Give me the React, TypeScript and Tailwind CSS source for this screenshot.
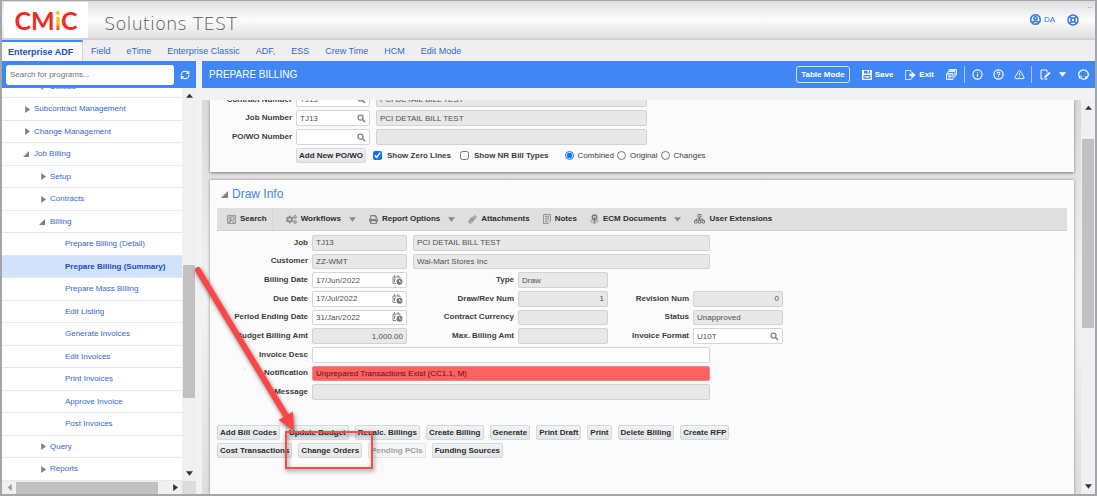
import React from "react";
import { Info, CircleHelp, TriangleAlert, RefreshCw, LifeBuoy } from "lucide-react";
import { FaRegUserCircle, FaCogs, FaPrint } from "react-icons/fa";

const navItems = ["Field", "eTime", "Enterprise Classic", "ADF,", "ESS", "Crew Time", "HCM", "Edit Mode"];

type Node = { label: string; level: 1 | 2 | 3; state?: "open" | "closed"; active?: boolean };

const tree: Node[] = [
  { label: "Utilities", level: 2, state: "closed" },
  { label: "Subcontract Management", level: 1, state: "closed" },
  { label: "Change Management", level: 1, state: "closed" },
  { label: "Job Billing", level: 1, state: "open" },
  { label: "Setup", level: 2, state: "closed" },
  { label: "Contracts", level: 2, state: "closed" },
  { label: "Billing", level: 2, state: "open" },
  { label: "Prepare Billing (Detail)", level: 3 },
  { label: "Prepare Billing (Summary)", level: 3, active: true },
  { label: "Prepare Mass Billing", level: 3 },
  { label: "Edit Listing", level: 3 },
  { label: "Generate Invoices", level: 3 },
  { label: "Edit Invoices", level: 3 },
  { label: "Print Invoices", level: 3 },
  { label: "Approve Invoice", level: 3 },
  { label: "Post Invoices", level: 3 },
  { label: "Query", level: 2, state: "closed" },
  { label: "Reports", level: 2, state: "closed" },
];

const indent = { 1: "pl-5", 2: "pl-9", 3: "pl-[63px]" };

function Tri({ dir, className = "" }: { dir: "up" | "down" | "left" | "right" | "open"; className?: string }) {
  const d = {
    up: "M0 6.500 L4 2 L8 6.500Z",
    down: "M0 1.500 L8 1.500 L4 6.500Z",
    left: "M6.500 0 L2 4 L6.500 8Z",
    right: "M2.500 0 L8 4 L2.500 8Z",
    open: "M8 0 L8 8 L0 8Z",
  }[dir];
  return (
    <svg viewBox="0 0 8 8" className={"shrink-0 fill-current " + className} aria-hidden="true">
      <path d={d} />
    </svg>
  );
}

function TreeRow({ node }: { node: Node }) {
  return (
    <li className={"h-[22px] shrink-0 border-b border-[#e3e9f1] even:h-[23px] " + (node.active ? "bg-[#d3e2fb]" : "bg-white")}>
      <a href="#" className={"flex h-full items-center whitespace-nowrap " + indent[node.level] + (node.active ? " font-bold text-[#1a4fb8]" : " text-[#3567cc]")}>
        {node.state && (
          <span className="flex w-3 shrink-0 pl-px text-[#808080]">
            <Tri dir={node.state === "open" ? "open" : "right"} className={node.state === "open" ? "size-[6px]" : "size-[7px]"} />
          </span>
        )}
        {node.label}
      </a>
    </li>
  );
}

function CalendarClock() {
  return (
    <svg viewBox="0 0 22 20" className="h-[10px] w-[11px]" fill="none" stroke="#858585" strokeWidth="2" aria-hidden="true">
      <path d="M8 17H2V4h14v3M5 0v5M12 0v5M5 8v6M5 8h3" />
      <circle cx="15" cy="13.500" r="6" fill="#757575" stroke="none" />
      <path d="M15 10v4h4" stroke="#fff" strokeWidth="1.500" />
    </svg>
  );
}

function Magnifier() {
  return (
    <svg viewBox="0 0 18 18" className="size-[9px]" fill="none" stroke="#808080" strokeWidth="2.500" aria-hidden="true">
      <circle cx="7" cy="7" r="5" />
      <path d="M11 11l5 5" strokeWidth="3.500" />
    </svg>
  );
}

type FieldProps = {
  id: string;
  value?: string;
  kind?: "edit" | "readonly" | "error";
  icon?: "search" | "date";
  right?: boolean;
  label?: string;
  className?: string;
};

function Field({ id, value = "", kind = "readonly", icon, right, label, className = "" }: FieldProps) {
  const tone = {
    edit: "bg-white border-[#d6d6d6]",
    readonly: "bg-[#e8e8e8] border-[#d2d2d2]",
    error: "bg-[#ff6060] border-[#e88] text-[#4a1a1a]",
  }[kind];
  return (
    <div className={"flex min-w-0 items-center rounded-[2px] border px-[3px] " + tone + " " + className}>
      <input
        id={id}
        aria-label={label}
        defaultValue={value}
        readOnly={kind !== "edit"}
        className={"h-full w-full min-w-0 bg-transparent outline-none " + (right ? "text-right" : "")}
      />
      {icon && (
        <button type="button" aria-label={icon === "search" ? "Look up" : "Choose date"} className="shrink-0">
          {icon === "search" ? <Magnifier /> : <CalendarClock />}
        </button>
      )}
    </div>
  );
}

function Label({ htmlFor, children, className = "" }: { htmlFor: string; children: React.ReactNode; className?: string }) {
  return (
    <label htmlFor={htmlFor} className={"self-center whitespace-nowrap text-right font-bold text-[#3c3c3c] " + className}>
      {children}
    </label>
  );
}

function Btn({ children, disabled }: { children: React.ReactNode; disabled?: boolean }) {
  return (
    <button
      type="button"
      disabled={disabled}
      className={
        "h-[15px] whitespace-nowrap rounded-[2px] border px-[2px] font-bold " +
        (disabled ? "border-[#e2e4e6] bg-[#f7f7f7] text-[#a0a0a0]" : "border-[#d3d8dc] bg-linear-to-b from-[#f1f3f4] to-[#e2e6e9] text-[#2c2c2c]")
      }
    >
      {children}
    </button>
  );
}

function ToolItem({ icon, children, menu, className = "" }: { icon: React.ReactNode; children: React.ReactNode; menu?: boolean; className?: string }) {
  return (
    <button type="button" className={"flex h-full items-center gap-1 whitespace-nowrap font-bold text-[#2e2e2e] " + className}>
      {icon}
      {children}
      {menu && <Tri dir="down" className="ml-1 size-[7px] text-[#8a8a8a]" />}
    </button>
  );
}

const line = { fill: "none", stroke: "currentColor", strokeWidth: 2, "aria-hidden": true } as const;

function FindIcon() {
  return (
    <svg viewBox="0 0 20 20" className="size-[9px] text-[#808080]" {...line}>
      <path d="M1.500 1.500h17v17h-17zM4 5h4M4 9h3M12 16h4" />
      <circle cx="12" cy="8" r="4" />
      <path d="M9.500 11 4 17" strokeWidth="3" />
    </svg>
  );
}
function ClipIcon() {
  return (
    <svg viewBox="0 0 20 20" className="size-[9px] text-[#777]" {...line}>
      <path d="M14 6 7 14c-1 1.500-3 0-2-1.500L13 3c2-2.500 6 0 4 3L8 17c-3 3-8 0-5.500-4L9 5" />
    </svg>
  );
}
function NotesIcon() {
  return (
    <svg viewBox="0 0 18 22" className="h-[10px] w-2 text-[#888]" {...line}>
      <path d="M1 1h16v15l-5 5H1zM4 5h10M4 9h10M4 13h10M4 17h6" />
    </svg>
  );
}
function EcmIcon() {
  return (
    <svg viewBox="0 0 20 22" className="h-[10px] w-[9px] text-[#777]" {...line}>
      <path d="M2 12v6l7 3 9-4v-5M3 15h4M13 14h4" stroke="#a0a0a0" />
      <circle cx="10" cy="7" r="5" strokeWidth="3" />
      <path d="M10 7v13" strokeWidth="3" />
    </svg>
  );
}
function OrgIcon() {
  return (
    <svg viewBox="0 0 22 20" className="h-[10px] w-[11px] text-[#777]" {...line}>
      <path d="M8 1h6v5H8zM11 6v7M4 13v-3h14v3M1 13h5v5H1zM8.500 13h5v5h-5zM16 13h5v5h-5z" />
    </svg>
  );
}
function SaveIcon() {
  return (
    <svg viewBox="0 0 20 20" className="size-[10px]" aria-hidden="true">
      <path fill="currentColor" fillRule="evenodd" d="M0 0h20v20H0zM4 1.500v5.500h12V1.500h-2v4h-3v-4zM3 10v8h14v-8z" />
      <path fill="currentColor" d="M5 12h10v1.500H5zM5 15h10v1.500H5z" />
    </svg>
  );
}
function ExitIcon() {
  return (
    <svg viewBox="0 0 22 20" className="h-[10px] w-[11px]" {...line}>
      <path d="M12 4V1H1v18h11v-3" strokeWidth="1.500" />
      <path d="M9 7.500h4V3l8 7-8 7v-4.500H9z" fill="currentColor" stroke="none" />
    </svg>
  );
}
function WindowsIcon() {
  return (
    <svg viewBox="0 0 22 22" className="size-[11px] opacity-85" {...line}>
      <path d="M6 5V1h15v11h-4M4 9V5h14v11h-3M1 9h13v12H1zM1 12h13M4 15h7M4 18h7M8 3h11" />
    </svg>
  );
}
function EditPageIcon() {
  return (
    <svg viewBox="0 0 22 22" className="size-[11px]" {...line}>
      <path d="M14 7V2H2v18h5M9 20h6" />
      <path d="M9 17 20 7" strokeWidth="3.500" />
    </svg>
  );
}
function RingIcon() {
  return (
    <svg viewBox="0 0 22 22" className="size-[11px]" fill="none" stroke="currentColor" strokeWidth="2.500" aria-hidden="true">
      <path d="M4 17A9 9 0 0 1 13 2.200M18 5A9 9 0 0 1 9 19.800" />
      <path d="M13 2.200A9 9 0 0 1 18 5M9 19.800A9 9 0 0 1 6.500 18.800" />
      <path d="M1 18h5v-5M16 20l-1-5 5 1" strokeWidth="2" />
    </svg>
  );
}

function VScroll({ before, thumb, after }: { before: string; thumb: string; after: string }) {
  return (
    <div className="flex w-[14px] shrink-0 flex-col items-center bg-[#f0f0f0] py-1 text-[#333]" aria-hidden="true">
      <Tri dir="up" className="size-[7px]" />
      <div className={before} />
      <div className={"w-3 bg-[#c1c1c1] " + thumb} />
      <div className={after} />
      <Tri dir="down" className="size-[7px]" />
    </div>
  );
}

function Choice({ type, id, children, checked, name, className = "" }: { type: "checkbox" | "radio"; id: string; children: React.ReactNode; checked?: boolean; name?: string; className?: string }) {
  return (
    <span className={"flex items-center gap-1 " + className}>
      <input id={id} type={type} name={name} defaultChecked={checked} className="m-0 size-[9px] accent-[#0b75ff]" />
      <label htmlFor={id} className={"whitespace-nowrap text-[#3c3c3c] " + (type === "checkbox" ? "pl-px font-bold" : "")}>
        {children}
      </label>
    </span>
  );
}

export default function App() {
  return (
    <div className="relative flex h-screen flex-col overflow-hidden border-2 border-t-1 border-[#a3a5a9] bg-[#f0f2f4] font-['Liberation_Sans',Arial,sans-serif] text-[8px] leading-[10px] text-[#505050]">
      <header className="relative flex h-[39px] shrink-0 items-stretch border-b-2 border-[#d2d2d2] bg-linear-to-b from-[#dedede] via-[#fcfcfc] to-[#e0e0e0] pl-[2px]">
        <div className="mt-px flex w-[84px] items-center justify-center bg-white font-['Lato',sans-serif] text-[25px] font-bold leading-none text-[#ee2b24]" aria-label="CMiC">
          CM<span className="bg-linear-to-b from-[#ffc20e] from-60% to-[#f15a24] to-80% bg-clip-text text-transparent">i</span>C
        </div>
        <h1 className="ml-4 self-center pt-2 font-['DejaVu_Sans',sans-serif] text-[18px] font-extralight leading-5 text-[#555]">Solutions TEST</h1>
        <div className="ml-auto flex items-center gap-3 pr-4 text-[#2f74ea]">
          <button type="button" className="flex items-center gap-[3px]">
            <FaRegUserCircle className="size-[11px]" strokeWidth={30} stroke="currentColor" />
            DA
          </button>
          <button type="button" aria-label="Help">
            <LifeBuoy className="size-3" strokeWidth={3} />
          </button>
        </div>
        <span className="absolute right-[3px] top-0 text-[#777]" aria-hidden="true">..</span>
      </header>

      <nav className="flex h-[21px] shrink-0 items-stretch bg-[#efefef] text-[9px] text-[#3567cc]" aria-label="Applications">
        <a href="#" className="flex w-[81px] items-center whitespace-nowrap border-r border-t-2 border-r-[#c9d6ea] border-t-[#4186f5] bg-[#fafafa] pl-[6px] font-bold text-[#1a4fb8]">
          Enterprise ADF
        </a>
        {navItems.map((n) => (
          <a key={n} href="#" className="flex items-center whitespace-nowrap px-2">
            {n}
          </a>
        ))}
      </nav>

      <div className="flex min-h-0 flex-1">
        <aside className="mr-[6px] flex w-[194px] shrink-0 flex-col">
          <div className="flex h-[27px] shrink-0 items-center bg-[#4186f5] pl-1 pr-[6px]">
            <input
              type="search"
              aria-label="Search for programs"
              placeholder="Search for programs..."
              className="h-5 w-[168px] rounded-[3px] bg-white px-1 text-[#555] placeholder:text-[#707070]"
            />
            <button type="button" aria-label="Refresh" className="ml-auto text-white">
              <RefreshCw className="size-[10px]" strokeWidth={2.5} />
            </button>
          </div>
          <div className="flex min-h-0 flex-1">
            <ul className="flex min-w-0 flex-1 flex-col justify-end overflow-hidden bg-white">
              {tree.map((n) => (
                <TreeRow key={n.label} node={n} />
              ))}
            </ul>
            <VScroll before="flex-[165]" thumb="flex-[132]" after="flex-[72]" />
          </div>
          <div className="flex h-[13px] shrink-0 bg-[#dcdcdc]" aria-hidden="true">
            <div className="flex flex-1 items-center bg-[#f0f0f0] px-1 text-[#333]">
              <Tri dir="left" className="size-[7px] text-[#999]" />
              <div className="ml-[3px] h-3 flex-[142] bg-[#c1c1c1]" />
              <div className="flex-[13]" />
              <Tri dir="right" className="size-[7px]" />
            </div>
            <div className="w-[14px]" />
          </div>
        </aside>

        <main className="flex min-w-0 flex-1 flex-col">
          <div className="flex h-[27px] shrink-0 items-center bg-[#4186f5] pl-[7px] pr-[6px] text-white">
            <h2 className="text-[10px]">PREPARE BILLING</h2>
            <div className="ml-auto flex items-center font-bold">
              <button type="button" className="h-[17px] whitespace-nowrap rounded-[3px] border border-[#cfe0ff] px-1">
                Table Mode
              </button>
              <button type="button" className="ml-3 flex items-center gap-[3px]">
                <SaveIcon />
                Save
              </button>
              <button type="button" className="ml-3 flex items-center gap-[3px]">
                <ExitIcon />
                Exit
              </button>
              <button type="button" aria-label="Windows" className="ml-3">
                <WindowsIcon />
              </button>
              <span className="ml-[7px] h-[17px] w-px bg-[#a9c8fb]" />
              <button type="button" aria-label="Information" className="ml-[7px]">
                <Info className="size-[11px]" strokeWidth={2.5} />
              </button>
              <button type="button" aria-label="Help" className="ml-[10px]">
                <CircleHelp className="size-[11px]" strokeWidth={2.5} />
              </button>
              <button type="button" aria-label="Warnings" className="ml-[10px]">
                <TriangleAlert className="size-[11px]" strokeWidth={2} />
              </button>
              <span className="ml-[6px] h-[17px] w-px bg-[#a9c8fb]" />
              <button type="button" aria-label="Edit page" className="ml-2 flex items-center gap-2">
                <EditPageIcon />
                <Tri dir="down" className="size-[7px]" />
              </button>
              <button type="button" aria-label="Reload" className="ml-3">
                <RingIcon />
              </button>
            </div>
          </div>

          <div className="mt-3 flex min-h-0 flex-1">
            <div className="flex min-w-0 flex-1 flex-col gap-2 overflow-hidden bg-linear-to-b from-[#d9d9d9] via-[#f4f4f4] to-[#dedede] pl-2 pr-[7px]">
              <section className="flex h-[72px] shrink-0 flex-col justify-end bg-[#fbfbfb] pb-[9px] shadow-[0_1px_3px_#777]">
                <div className="grid grid-cols-[82px_74px_273px] gap-x-1 gap-y-[3px]">
                  <Label htmlFor="contract">Contract Number</Label>
                  <Field id="contract" value="TJ13" kind="edit" icon="search" />
                  <Field id="contract-name" label="Contract name" value="PCI DETAIL BILL TEST" className="ml-[2px] h-[15px]" />
                  <Label htmlFor="jobno">Job Number</Label>
                  <Field id="jobno" value="TJ13" kind="edit" icon="search" />
                  <Field id="jobno-name" label="Job name" value="PCI DETAIL BILL TEST" className="ml-[2px] h-4" />
                  <Label htmlFor="powo">PO/WO Number</Label>
                  <Field id="powo" kind="edit" icon="search" />
                  <Field id="powo-name" label="PO/WO name" className="ml-[2px] h-4" />
                </div>
                <div className="mt-[3px] flex items-center pl-[86px]">
                  <Btn>Add New PO/WO</Btn>
                  <Choice type="checkbox" id="zero" checked className="ml-[7px]">Show Zero Lines</Choice>
                  <Choice type="checkbox" id="nr" className="ml-[9px]">Show NR Bill Types</Choice>
                  <Choice type="radio" name="view" id="combined" checked className="ml-4">Combined</Choice>
                  <Choice type="radio" name="view" id="original" className="ml-[3px]">Original</Choice>
                  <Choice type="radio" name="view" id="changes" className="ml-[3px]">Changes</Choice>
                </div>
              </section>

              <section className="flex flex-1 flex-col bg-[#fbfbfb] px-[7px] shadow-[0_0_3px_#888]">
                <h3 className="flex h-7 items-center gap-1 pl-1 text-[12px] text-[#4285f4]">
                  <Tri dir="open" className="size-[7px] text-[#808080]" />
                  Draw Info
                </h3>
                <div className="flex h-[23px] shrink-0 items-center gap-[13px] border-b border-[#d0d0d0] bg-[#dfdfdf] pl-[10px]">
                  <ToolItem icon={<FindIcon />} className="border-r border-[#d8d8d8] pr-[5px]">Search</ToolItem>
                  <ToolItem icon={<FaCogs className="size-[11px] text-[#8a8a8a]" />} menu>Workflows</ToolItem>
                  <ToolItem icon={<FaPrint className="size-[9px] text-[#808080]" />} menu>Report Options</ToolItem>
                  <ToolItem icon={<ClipIcon />}>Attachments</ToolItem>
                  <ToolItem icon={<NotesIcon />}>Notes</ToolItem>
                  <ToolItem icon={<EcmIcon />} menu>ECM Documents</ToolItem>
                  <ToolItem icon={<OrgIcon />}>User Extensions</ToolItem>
                </div>

                <div className="mt-1 grid h-[165px] shrink-0 grid-cols-[91px_95px_103px_90px_77px_90px] grid-rows-9 gap-x-1 gap-y-[3px]">
                  <Label htmlFor="job">Job</Label>
                  <Field id="job" value="TJ13" />
                  <Field id="job-name" label="Job name" value="PCI DETAIL BILL TEST" className="col-span-4 ml-[2px] mr-[73px]" />

                  <Label htmlFor="customer">Customer</Label>
                  <Field id="customer" value="ZZ-WMT" />
                  <Field id="customer-name" label="Customer name" value="Wal-Mart Stores Inc" className="col-span-4 ml-[2px] mr-[73px]" />

                  <Label htmlFor="billdate">Billing Date</Label>
                  <Field id="billdate" value="17/Jun/2022" kind="edit" icon="date" />
                  <Label htmlFor="type">Type</Label>
                  <Field id="type" value="Draw" />

                  <Label htmlFor="duedate" className="col-start-1">Due Date</Label>
                  <Field id="duedate" value="17/Jul/2022" kind="edit" icon="date" />
                  <Label htmlFor="drawrev">Draw/Rev Num</Label>
                  <Field id="drawrev" value="1" right />
                  <Label htmlFor="revision">Revision Num</Label>
                  <Field id="revision" value="0" right />

                  <Label htmlFor="period">Period Ending Date</Label>
                  <Field id="period" value="31/Jan/2022" kind="edit" icon="date" />
                  <Label htmlFor="currency">Contract Currency</Label>
                  <Field id="currency" />
                  <Label htmlFor="status">Status</Label>
                  <Field id="status" value="Unapproved" />

                  <Label htmlFor="budget">Budget Billing Amt</Label>
                  <Field id="budget" value="1,000.00" right />
                  <Label htmlFor="maxamt">Max. Billing Amt</Label>
                  <Field id="maxamt" />
                  <Label htmlFor="format">Invoice Format</Label>
                  <Field id="format" value="U10T" kind="edit" icon="search" />

                  <Label htmlFor="desc">Invoice Desc</Label>
                  <Field id="desc" kind="edit" className="col-span-5 mr-[73px]" />
                  <Label htmlFor="notification">Notification</Label>
                  <Field id="notification" value="Unprepared Transactions Exist (CC1.1, M)" kind="error" className="col-span-5 mr-[73px]" />
                  <Label htmlFor="message">Message</Label>
                  <Field id="message" className="col-span-5 mr-[73px]" />
                </div>

                <div className="mt-[25px] flex gap-[6px]">
                  <Btn>Add Bill Codes</Btn>
                  <Btn>Update Budget</Btn>
                  <Btn>Recalc. Billings</Btn>
                  <Btn>Create Billing</Btn>
                  <Btn>Generate</Btn>
                  <Btn>Print Draft</Btn>
                  <Btn>Print</Btn>
                  <Btn>Delete Billing</Btn>
                  <Btn>Create RFP</Btn>
                </div>
                <div className="mt-[3px] flex gap-[6px]">
                  <Btn>Cost Transactions</Btn>
                  <Btn>Change Orders</Btn>
                  <Btn disabled>Pending PCIs</Btn>
                  <Btn>Funding Sources</Btn>
                </div>
              </section>
            </div>
            <VScroll before="flex-[28]" thumb="flex-[189]" after="flex-[155]" />
          </div>
        </main>
      </div>

      <svg className="pointer-events-none absolute left-[190px] top-[260px] h-[220px] w-[190px] drop-shadow-[1px_2px_2px_rgba(0,0,0,0.5)]" viewBox="190 260 190 220" aria-hidden="true">
        <path d="M196 269 286 418" stroke="#fd4545" strokeWidth="6" strokeLinecap="round" />
        <path d="M292 430 276.500 419 291 410.500Z" fill="#fd4545" />
        <rect x="284" y="431" width="86" height="36" fill="none" stroke="#f0504c" strokeWidth="2" />
      </svg>
    </div>
  );
}
